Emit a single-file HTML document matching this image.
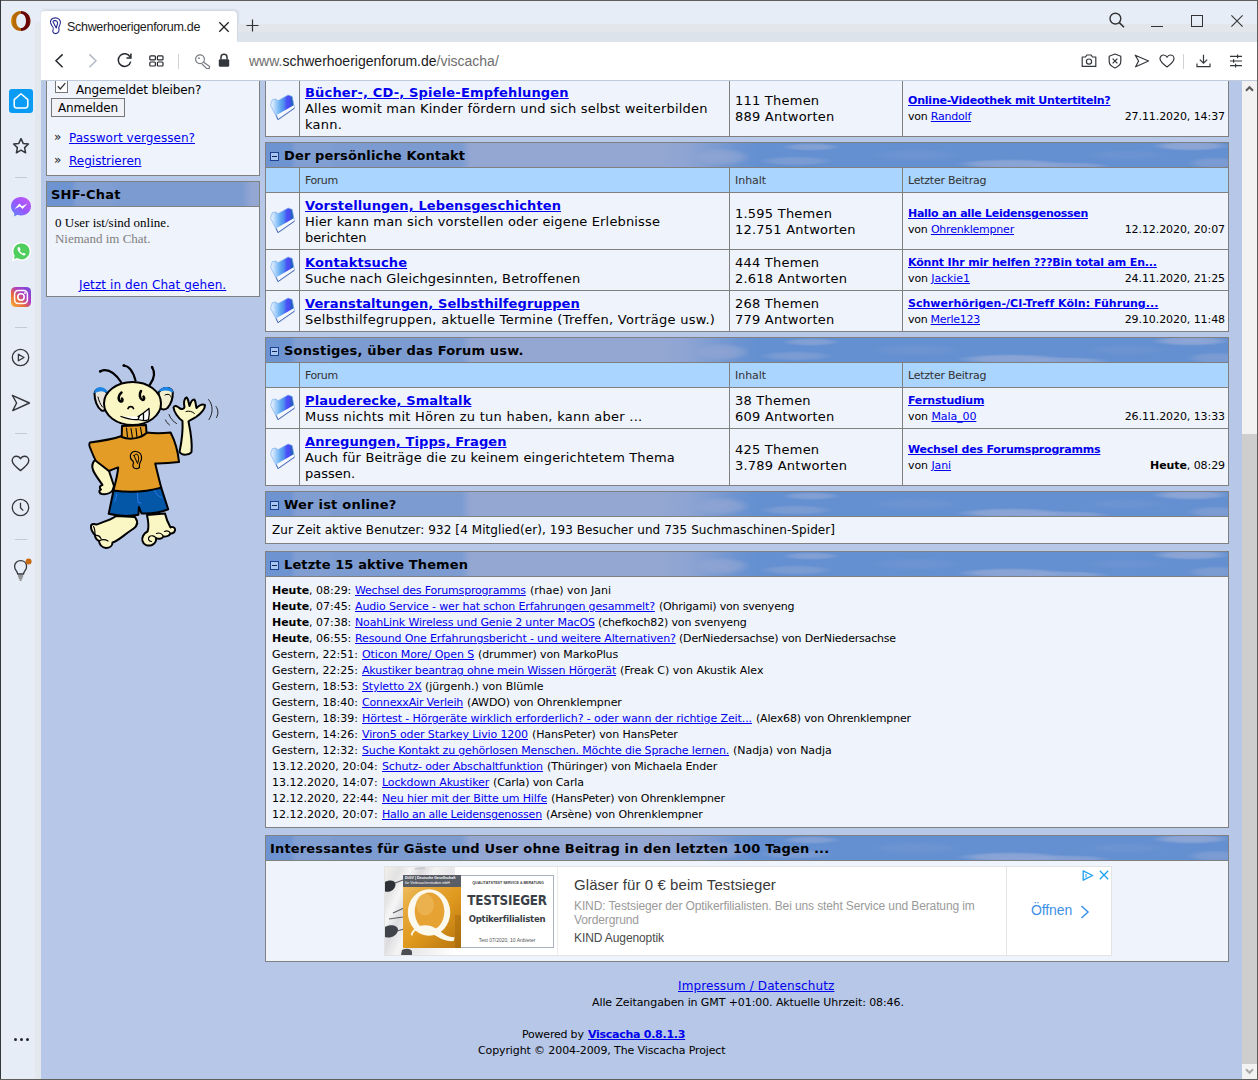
<!DOCTYPE html>
<html lang="de"><head><meta charset="utf-8"><title>Schwerhoerigenforum.de</title>
<style>
*{box-sizing:border-box;margin:0;padding:0}
html,body{width:1258px;height:1080px;overflow:hidden;background:#e7edf6}
body{position:relative;font-family:"DejaVu Sans","Liberation Sans",sans-serif;font-size:13px;color:#000}
a{color:#0000ee;text-decoration:underline}
.abs{position:absolute}
/* browser chrome */
#topline{left:0;top:0;width:1258px;height:1px;background:#5e5e5a}
#leftline{left:0;top:0;width:1px;height:1080px;background:#33363a}
#rightline{left:1257px;top:0;width:1px;height:1080px;background:#5e5e5a}
#botline{left:0;top:1079px;width:1258px;height:1px;background:#5e5e5a}
#tabbar{left:1px;top:1px;width:1256px;height:41px;background:#e7edf6}
#tab{left:41px;top:11px;width:196px;height:31px;background:#fff;border-radius:4px 4px 0 0;box-shadow:1px -1px 3px rgba(120,130,150,.28)}
#tabtitle{left:67px;top:19px;font-family:"Liberation Sans",sans-serif;font-size:12.5px;line-height:16px;color:#1b1b1b;letter-spacing:-0.3px}
#toolbar{left:41px;top:42px;width:1216px;height:38px;background:#fff}
#tbline{left:41px;top:80px;width:1216px;height:1px;background:#bfcbdd}
#side{left:1px;top:41px;width:40px;height:1038px;background:#e7edf6}
#url{left:249px;top:53px;font-family:"Liberation Sans",sans-serif;font-size:14px;color:#6e6e6e;white-space:nowrap}
#url b{font-weight:normal;color:#1b1b1b}
#ologo{left:11px;top:7px;font-family:"Liberation Serif",serif;font-weight:bold;font-size:24px;line-height:28px;color:#b25a08;background:linear-gradient(90deg,#c97a10 0%,#b35a06 45%,#5a0d0d 75%,#6a1010 100%);-webkit-background-clip:text;background-clip:text;-webkit-text-fill-color:transparent}
.sep{left:15px;width:12px;height:1px;background:#c3cbd7}
#sideband{left:35px;top:22px;width:6px;height:1057px;background:#e3e8ef}
#tabband{left:238px;top:24px;width:1019px;height:18px;background:linear-gradient(#e3e6ea 0,#e3e6ea 8px,#dde3eb 8px,#dde3eb 18px)}
/* page */
#view{left:41px;top:81px;width:1201px;height:998px;background:#b7c7e7;overflow:hidden}
#scroll{left:1242px;top:81px;width:15px;height:998px;background:#f2f2f2}
#thumb{left:1242px;top:434px;width:15px;height:630px;background:#cecece}
.t{position:absolute;white-space:nowrap}
.b{font-weight:bold}
.boxr,.rowr{background:#eff3fb;border:1px solid #808080}
.hdr{border:1px solid #808080;background-color:#6490d1;background-image:
radial-gradient(ellipse 55px 5px at 745px 21px,rgba(146,168,214,.85) 0,rgba(146,168,214,.75) 60%,rgba(146,168,214,0) 100%),
radial-gradient(ellipse 45px 4px at 800px 23px,rgba(146,168,214,.7) 0,rgba(146,168,214,.6) 60%,rgba(146,168,214,0) 100%),
radial-gradient(ellipse 40px 5px at 925px 3px,rgba(150,170,214,.85) 0,rgba(150,170,214,.7) 60%,rgba(150,170,214,0) 100%),
radial-gradient(ellipse 30px 6px at 950px 20px,rgba(140,164,212,.6) 0,rgba(140,164,212,.5) 60%,rgba(140,164,212,0) 100%),
radial-gradient(ellipse 30px 4px at 545px 4px,rgba(146,168,214,.7) 0,rgba(146,168,214,.55) 60%,rgba(146,168,214,0) 100%),
radial-gradient(ellipse 38px 5px at 530px 18px,rgba(140,164,212,.6) 0,rgba(140,164,212,.5) 60%,rgba(140,164,212,0) 100%),
radial-gradient(ellipse 30px 9px at 455px 14px,rgba(146,166,211,.8) 0,rgba(146,166,211,.6) 60%,rgba(146,166,211,0) 100%),
radial-gradient(ellipse 45px 6px at 650px 12px,rgba(120,152,210,.5) 0,rgba(120,152,210,.4) 60%,rgba(120,152,210,0) 100%),
radial-gradient(ellipse 40px 5px at 860px 12px,rgba(120,152,210,.45) 0,rgba(120,152,210,.35) 60%,rgba(120,152,210,0) 100%),
linear-gradient(90deg,#6d93d0 0,#6d93d0 24px,#809ed2 30px,#809ed2 62px,#7b9bd1 70px,#7b9bd1 195px,#94a7d3 205px,#94a7d3 395px,#8ea4d3 420px,#7f9dd2 445px,#6d94d1 470px,#6490d1 490px)}
.subr{background:#a9d5ff;border:1px solid #808080}
.ln{background:#808080}
.sh{color:#333}
.ft{letter-spacing:.12px}.fd{letter-spacing:.23px}.on{letter-spacing:.07px}.tp{letter-spacing:-.08px}.lt{letter-spacing:-.2px}.lu{letter-spacing:-.08px}.hd{letter-spacing:.15px}.sh{letter-spacing:-.2px}
.ser{font-family:"Liberation Serif",serif}
</style></head><body>
<div class="abs" id="tabbar"></div>
<div class="abs" id="tab"></div>
<div class="abs" id="tabtitle">Schwerhoerigenforum.de</div>
<div class="abs" id="toolbar"></div>
<div class="abs" id="tbline"></div>
<div class="abs" id="side"></div><div class="abs" id="sideband"></div><div class="abs" id="tabband"></div>
<div class="abs" id="url">www.<b>schwerhoerigenforum.de</b>/viscacha/</div>
<div class="abs" id="view">
<div class="abs boxr" style="left:5px;top:-21px;width:214px;height:116px;"></div>
<div class="abs" style="left:14px;top:-1px;width:13px;height:13px;border:1px solid #767676;background:#fff"></div>
<svg class="abs" style="left:15px;top:0px" width="11" height="11" viewBox="0 0 11 11"><path d="M1.8 5.2 L4.3 8 L9.3 2.2" fill="none" stroke="#333" stroke-width="1.3"/></svg>
<div class="t l12" style="left:35px;top:1px;font-size:12px;line-height:16px;letter-spacing:-0.116px;">Angemeldet bleiben?</div>
<div class="abs" style="left:10px;top:17px;width:74px;height:19px;border:1px solid #767676;background:#f0f2f7"></div>
<div class="t l12" style="left:17px;top:19px;font-size:12px;line-height:16px;letter-spacing:-0.104px;">Anmelden</div>
<div class="t " style="left:13px;top:48px;font-size:12px;line-height:16px;color:#222">»</div>
<div class="t lk" style="left:28px;top:49px;font-size:12px;line-height:16px;letter-spacing:0.037px;"><a href="#">Passwort vergessen?</a></div>
<div class="t " style="left:13px;top:71px;font-size:12px;line-height:16px;color:#222">»</div>
<div class="t lk" style="left:28px;top:72px;font-size:12px;line-height:16px;letter-spacing:-0.001px;"><a href="#">Registrieren</a></div>
<div class="abs boxr" style="left:5px;top:100px;width:214px;height:116px;"></div>
<div class="abs hdr" style="left:5px;top:100px;width:214px;height:26px;"></div>
<div class="t b hd" style="left:10px;top:106px;font-size:13px;line-height:16px;letter-spacing:0.213px;">SHF-Chat</div>
<div class="t ser" style="left:14px;top:134px;font-size:13px;line-height:16px;letter-spacing:0.013px;">0 User ist/sind online.</div>
<div class="t ser" style="left:14px;top:150px;font-size:13px;line-height:16px;color:#808080;letter-spacing:-0.019px;">Niemand im Chat.</div>
<div class="t lk" style="left:38px;top:196px;font-size:12px;line-height:16px;letter-spacing:.1px"><a href="#">Jetzt in den Chat gehen.</a></div>
<div class="abs rowr" style="left:224px;top:-2px;width:964px;height:58px;"></div>
<div class="abs ln" style="left:258px;top:-2px;width:1px;height:57px;"></div>
<div class="abs ln" style="left:688px;top:-2px;width:1px;height:57px;"></div>
<div class="abs ln" style="left:861px;top:-2px;width:1px;height:57px;"></div>
<svg class="abs" style="left:229px;top:13px" width="26" height="27" viewBox="0 0 26 27"><defs><linearGradient id="fg1" x1="0" y1="0" x2="1" y2="0"><stop offset="0" stop-color="#eef6ff"/><stop offset=".1" stop-color="#d4e7fc"/><stop offset=".24" stop-color="#9fcdf9"/><stop offset=".42" stop-color="#62aaf0"/><stop offset=".56" stop-color="#4f8cf0"/><stop offset=".68" stop-color="#4a52f6"/><stop offset=".8" stop-color="#4a4af6"/><stop offset=".86" stop-color="#2a5cc8"/><stop offset="1" stop-color="#1a62b4"/></linearGradient></defs><path d="M1.2 12 L3 6.500 L6.600 5.800 L8.500 7.600 L18.600 1.800 L22.700 3.200 L25 14.800 L8.600 26.300 Z" fill="#8a93a8" opacity=".35"/><path d="M.5 11.200 L2.300 5.700 L6 5 L7.900 6.800 L18.100 1 L22.200 2.400 L24.300 14.200 L7.900 25.600 Z" fill="url(#fg1)" stroke="#7fb0ee" stroke-width=".7"/><path d="M6.300 21.300 L23.700 11.300 L24.300 14.200 L7.900 25.600 Z" fill="#f6f8fc"/><path d="M6.300 21.300 L7.900 25.600 L24.300 14.200" fill="none" stroke="#3f62b6" stroke-width=".9"/></svg>
<div class="t b ft" style="left:264px;top:4px;font-size:13px;line-height:16px;letter-spacing:0.173px;"><a href="#">Bücher-, CD-, Spiele-Empfehlungen</a></div>
<div class="t fd" style="left:264px;top:20px;font-size:13px;line-height:16px;letter-spacing:0.185px;">Alles womit man Kinder fördern und sich selbst weiterbilden</div>
<div class="t fd" style="left:264px;top:36px;font-size:13px;line-height:16px;">kann.</div>
<div class="t fd" style="left:694px;top:12px;font-size:13px;line-height:16px;">111 Themen</div>
<div class="t fd" style="left:694px;top:28px;font-size:13px;line-height:16px;">889 Antworten</div>
<div class="t b lt" style="left:867px;top:12px;font-size:11px;line-height:16px;letter-spacing:-0.210px;"><a href="#">Online-Videothek mit Untertiteln?</a></div>
<div class="t lu" style="left:867px;top:28px;font-size:11px;line-height:16px;letter-spacing:-0.218px;">von <a href="#">Randolf</a></div>
<div class="t lu" style="right:17px;top:28px;font-size:11px;line-height:16px;">27.11.2020, 14:37</div>
<div class="abs hdr" style="left:224px;top:61px;width:964px;height:26px;"></div>
<svg class="abs" style="left:229px;top:71px" width="9" height="9" viewBox="0 0 9 9"><rect x=".5" y=".5" width="8" height="8" fill="#a8c6f0" stroke="#1d3f8f"/><rect x="2" y="4" width="5" height="1" fill="#10285f"/></svg>
<div class="t b hd" style="left:243px;top:67px;font-size:13px;line-height:16px;letter-spacing:0.136px;">Der persönliche Kontakt</div>
<div class="abs subr" style="left:224px;top:86px;width:964px;height:26px;"></div>
<div class="abs ln" style="left:258px;top:86px;width:1px;height:26px;"></div>
<div class="abs ln" style="left:688px;top:86px;width:1px;height:26px;"></div>
<div class="abs ln" style="left:861px;top:86px;width:1px;height:26px;"></div>
<div class="t sh" style="left:264px;top:92px;font-size:11px;line-height:16px;letter-spacing:-0.444px;">Forum</div>
<div class="t sh" style="left:694px;top:92px;font-size:11px;line-height:16px;letter-spacing:-0.023px;">Inhalt</div>
<div class="t sh" style="left:867px;top:92px;font-size:11px;line-height:16px;letter-spacing:-0.245px;">Letzter Beitrag</div>
<div class="abs rowr" style="left:224px;top:111px;width:964px;height:58px;"></div>
<div class="abs ln" style="left:258px;top:111px;width:1px;height:57px;"></div>
<div class="abs ln" style="left:688px;top:111px;width:1px;height:57px;"></div>
<div class="abs ln" style="left:861px;top:111px;width:1px;height:57px;"></div>
<svg class="abs" style="left:229px;top:126px" width="26" height="27" viewBox="0 0 26 27"><defs><linearGradient id="fg2" x1="0" y1="0" x2="1" y2="0"><stop offset="0" stop-color="#eef6ff"/><stop offset=".1" stop-color="#d4e7fc"/><stop offset=".24" stop-color="#9fcdf9"/><stop offset=".42" stop-color="#62aaf0"/><stop offset=".56" stop-color="#4f8cf0"/><stop offset=".68" stop-color="#4a52f6"/><stop offset=".8" stop-color="#4a4af6"/><stop offset=".86" stop-color="#2a5cc8"/><stop offset="1" stop-color="#1a62b4"/></linearGradient></defs><path d="M1.2 12 L3 6.500 L6.600 5.800 L8.500 7.600 L18.600 1.800 L22.700 3.200 L25 14.800 L8.600 26.300 Z" fill="#8a93a8" opacity=".35"/><path d="M.5 11.200 L2.300 5.700 L6 5 L7.900 6.800 L18.100 1 L22.200 2.400 L24.300 14.200 L7.900 25.600 Z" fill="url(#fg2)" stroke="#7fb0ee" stroke-width=".7"/><path d="M6.300 21.300 L23.700 11.300 L24.300 14.200 L7.900 25.600 Z" fill="#f6f8fc"/><path d="M6.300 21.300 L7.900 25.600 L24.300 14.200" fill="none" stroke="#3f62b6" stroke-width=".9"/></svg>
<div class="t b ft" style="left:264px;top:117px;font-size:13px;line-height:16px;letter-spacing:0.111px;"><a href="#">Vorstellungen, Lebensgeschichten</a></div>
<div class="t fd" style="left:264px;top:133px;font-size:13px;line-height:16px;letter-spacing:0.160px;">Hier kann man sich vorstellen oder eigene Erlebnisse</div>
<div class="t fd" style="left:264px;top:149px;font-size:13px;line-height:16px;letter-spacing:-0.067px;">berichten</div>
<div class="t fd" style="left:694px;top:125px;font-size:13px;line-height:16px;">1.595 Themen</div>
<div class="t fd" style="left:694px;top:141px;font-size:13px;line-height:16px;">12.751 Antworten</div>
<div class="t b lt" style="left:867px;top:125px;font-size:11px;line-height:16px;letter-spacing:-0.274px;"><a href="#">Hallo an alle Leidensgenossen</a></div>
<div class="t lu" style="left:867px;top:141px;font-size:11px;line-height:16px;letter-spacing:-0.208px;">von <a href="#">Ohrenklempner</a></div>
<div class="t lu" style="right:17px;top:141px;font-size:11px;line-height:16px;">12.12.2020, 20:07</div>
<div class="abs rowr" style="left:224px;top:168px;width:964px;height:42px;"></div>
<div class="abs ln" style="left:258px;top:168px;width:1px;height:41px;"></div>
<div class="abs ln" style="left:688px;top:168px;width:1px;height:41px;"></div>
<div class="abs ln" style="left:861px;top:168px;width:1px;height:41px;"></div>
<svg class="abs" style="left:229px;top:175px" width="26" height="27" viewBox="0 0 26 27"><defs><linearGradient id="fg3" x1="0" y1="0" x2="1" y2="0"><stop offset="0" stop-color="#eef6ff"/><stop offset=".1" stop-color="#d4e7fc"/><stop offset=".24" stop-color="#9fcdf9"/><stop offset=".42" stop-color="#62aaf0"/><stop offset=".56" stop-color="#4f8cf0"/><stop offset=".68" stop-color="#4a52f6"/><stop offset=".8" stop-color="#4a4af6"/><stop offset=".86" stop-color="#2a5cc8"/><stop offset="1" stop-color="#1a62b4"/></linearGradient></defs><path d="M1.2 12 L3 6.500 L6.600 5.800 L8.500 7.600 L18.600 1.800 L22.700 3.200 L25 14.800 L8.600 26.300 Z" fill="#8a93a8" opacity=".35"/><path d="M.5 11.200 L2.300 5.700 L6 5 L7.900 6.800 L18.100 1 L22.200 2.400 L24.300 14.200 L7.900 25.600 Z" fill="url(#fg3)" stroke="#7fb0ee" stroke-width=".7"/><path d="M6.300 21.300 L23.700 11.300 L24.300 14.200 L7.900 25.600 Z" fill="#f6f8fc"/><path d="M6.300 21.300 L7.900 25.600 L24.300 14.200" fill="none" stroke="#3f62b6" stroke-width=".9"/></svg>
<div class="t b ft" style="left:264px;top:174px;font-size:13px;line-height:16px;letter-spacing:0.122px;"><a href="#">Kontaktsuche</a></div>
<div class="t fd" style="left:264px;top:190px;font-size:13px;line-height:16px;letter-spacing:0.142px;">Suche nach Gleichgesinnten, Betroffenen</div>
<div class="t fd" style="left:694px;top:174px;font-size:13px;line-height:16px;">444 Themen</div>
<div class="t fd" style="left:694px;top:190px;font-size:13px;line-height:16px;">2.618 Antworten</div>
<div class="t b lt" style="left:867px;top:174px;font-size:11px;line-height:16px;letter-spacing:-0.169px;"><a href="#">Könnt Ihr mir helfen ???Bin total am En...</a></div>
<div class="t lu" style="left:867px;top:190px;font-size:11px;line-height:16px;letter-spacing:-0.095px;">von <a href="#">Jackie1</a></div>
<div class="t lu" style="right:17px;top:190px;font-size:11px;line-height:16px;">24.11.2020, 21:25</div>
<div class="abs rowr" style="left:224px;top:209px;width:964px;height:42px;"></div>
<div class="abs ln" style="left:258px;top:209px;width:1px;height:41px;"></div>
<div class="abs ln" style="left:688px;top:209px;width:1px;height:41px;"></div>
<div class="abs ln" style="left:861px;top:209px;width:1px;height:41px;"></div>
<svg class="abs" style="left:229px;top:216px" width="26" height="27" viewBox="0 0 26 27"><defs><linearGradient id="fg4" x1="0" y1="0" x2="1" y2="0"><stop offset="0" stop-color="#eef6ff"/><stop offset=".1" stop-color="#d4e7fc"/><stop offset=".24" stop-color="#9fcdf9"/><stop offset=".42" stop-color="#62aaf0"/><stop offset=".56" stop-color="#4f8cf0"/><stop offset=".68" stop-color="#4a52f6"/><stop offset=".8" stop-color="#4a4af6"/><stop offset=".86" stop-color="#2a5cc8"/><stop offset="1" stop-color="#1a62b4"/></linearGradient></defs><path d="M1.2 12 L3 6.500 L6.600 5.800 L8.500 7.600 L18.600 1.800 L22.700 3.200 L25 14.800 L8.600 26.300 Z" fill="#8a93a8" opacity=".35"/><path d="M.5 11.200 L2.300 5.700 L6 5 L7.900 6.800 L18.100 1 L22.200 2.400 L24.300 14.200 L7.900 25.600 Z" fill="url(#fg4)" stroke="#7fb0ee" stroke-width=".7"/><path d="M6.300 21.300 L23.700 11.300 L24.300 14.200 L7.900 25.600 Z" fill="#f6f8fc"/><path d="M6.300 21.300 L7.900 25.600 L24.300 14.200" fill="none" stroke="#3f62b6" stroke-width=".9"/></svg>
<div class="t b ft" style="left:264px;top:215px;font-size:13px;line-height:16px;letter-spacing:0.093px;"><a href="#">Veranstaltungen, Selbsthilfegruppen</a></div>
<div class="t fd" style="left:264px;top:231px;font-size:13px;line-height:16px;letter-spacing:0.265px;">Selbsthilfegruppen, aktuelle Termine (Treffen, Vorträge usw.)</div>
<div class="t fd" style="left:694px;top:215px;font-size:13px;line-height:16px;">268 Themen</div>
<div class="t fd" style="left:694px;top:231px;font-size:13px;line-height:16px;">779 Antworten</div>
<div class="t b lt" style="left:867px;top:215px;font-size:11px;line-height:16px;letter-spacing:0.030px;"><a href="#">Schwerhörigen-/CI-Treff Köln: Führung...</a></div>
<div class="t lu" style="left:867px;top:231px;font-size:11px;line-height:16px;letter-spacing:-0.275px;">von <a href="#">Merle123</a></div>
<div class="t lu" style="right:17px;top:231px;font-size:11px;line-height:16px;">29.10.2020, 11:48</div>
<div class="abs hdr" style="left:224px;top:256px;width:964px;height:26px;"></div>
<svg class="abs" style="left:229px;top:266px" width="9" height="9" viewBox="0 0 9 9"><rect x=".5" y=".5" width="8" height="8" fill="#a8c6f0" stroke="#1d3f8f"/><rect x="2" y="4" width="5" height="1" fill="#10285f"/></svg>
<div class="t b hd" style="left:243px;top:262px;font-size:13px;line-height:16px;letter-spacing:0.187px;">Sonstiges, über das Forum usw.</div>
<div class="abs subr" style="left:224px;top:281px;width:964px;height:26px;"></div>
<div class="abs ln" style="left:258px;top:281px;width:1px;height:26px;"></div>
<div class="abs ln" style="left:688px;top:281px;width:1px;height:26px;"></div>
<div class="abs ln" style="left:861px;top:281px;width:1px;height:26px;"></div>
<div class="t sh" style="left:264px;top:287px;font-size:11px;line-height:16px;letter-spacing:-0.444px;">Forum</div>
<div class="t sh" style="left:694px;top:287px;font-size:11px;line-height:16px;letter-spacing:-0.023px;">Inhalt</div>
<div class="t sh" style="left:867px;top:287px;font-size:11px;line-height:16px;letter-spacing:-0.245px;">Letzter Beitrag</div>
<div class="abs rowr" style="left:224px;top:306px;width:964px;height:42px;"></div>
<div class="abs ln" style="left:258px;top:306px;width:1px;height:41px;"></div>
<div class="abs ln" style="left:688px;top:306px;width:1px;height:41px;"></div>
<div class="abs ln" style="left:861px;top:306px;width:1px;height:41px;"></div>
<svg class="abs" style="left:229px;top:313px" width="26" height="27" viewBox="0 0 26 27"><defs><linearGradient id="fg5" x1="0" y1="0" x2="1" y2="0"><stop offset="0" stop-color="#eef6ff"/><stop offset=".1" stop-color="#d4e7fc"/><stop offset=".24" stop-color="#9fcdf9"/><stop offset=".42" stop-color="#62aaf0"/><stop offset=".56" stop-color="#4f8cf0"/><stop offset=".68" stop-color="#4a52f6"/><stop offset=".8" stop-color="#4a4af6"/><stop offset=".86" stop-color="#2a5cc8"/><stop offset="1" stop-color="#1a62b4"/></linearGradient></defs><path d="M1.2 12 L3 6.500 L6.600 5.800 L8.500 7.600 L18.600 1.800 L22.700 3.200 L25 14.800 L8.600 26.300 Z" fill="#8a93a8" opacity=".35"/><path d="M.5 11.200 L2.300 5.700 L6 5 L7.900 6.800 L18.100 1 L22.200 2.400 L24.300 14.200 L7.900 25.600 Z" fill="url(#fg5)" stroke="#7fb0ee" stroke-width=".7"/><path d="M6.300 21.300 L23.700 11.300 L24.300 14.200 L7.900 25.600 Z" fill="#f6f8fc"/><path d="M6.300 21.300 L7.900 25.600 L24.300 14.200" fill="none" stroke="#3f62b6" stroke-width=".9"/></svg>
<div class="t b ft" style="left:264px;top:312px;font-size:13px;line-height:16px;letter-spacing:0.121px;"><a href="#">Plauderecke, Smaltalk</a></div>
<div class="t fd" style="left:264px;top:328px;font-size:13px;line-height:16px;letter-spacing:0.257px;">Muss nichts mit Hören zu tun haben, kann aber ...</div>
<div class="t fd" style="left:694px;top:312px;font-size:13px;line-height:16px;">38 Themen</div>
<div class="t fd" style="left:694px;top:328px;font-size:13px;line-height:16px;">609 Antworten</div>
<div class="t b lt" style="left:867px;top:312px;font-size:11px;line-height:16px;"><a href="#">Fernstudium</a></div>
<div class="t lu" style="left:867px;top:328px;font-size:11px;line-height:16px;">von <a href="#">Mala_00</a></div>
<div class="t lu" style="right:17px;top:328px;font-size:11px;line-height:16px;">26.11.2020, 13:33</div>
<div class="abs rowr" style="left:224px;top:347px;width:964px;height:58px;"></div>
<div class="abs ln" style="left:258px;top:347px;width:1px;height:57px;"></div>
<div class="abs ln" style="left:688px;top:347px;width:1px;height:57px;"></div>
<div class="abs ln" style="left:861px;top:347px;width:1px;height:57px;"></div>
<svg class="abs" style="left:229px;top:362px" width="26" height="27" viewBox="0 0 26 27"><defs><linearGradient id="fg6" x1="0" y1="0" x2="1" y2="0"><stop offset="0" stop-color="#eef6ff"/><stop offset=".1" stop-color="#d4e7fc"/><stop offset=".24" stop-color="#9fcdf9"/><stop offset=".42" stop-color="#62aaf0"/><stop offset=".56" stop-color="#4f8cf0"/><stop offset=".68" stop-color="#4a52f6"/><stop offset=".8" stop-color="#4a4af6"/><stop offset=".86" stop-color="#2a5cc8"/><stop offset="1" stop-color="#1a62b4"/></linearGradient></defs><path d="M1.2 12 L3 6.500 L6.600 5.800 L8.500 7.600 L18.600 1.800 L22.700 3.200 L25 14.800 L8.600 26.300 Z" fill="#8a93a8" opacity=".35"/><path d="M.5 11.200 L2.300 5.700 L6 5 L7.900 6.800 L18.100 1 L22.200 2.400 L24.300 14.200 L7.900 25.600 Z" fill="url(#fg6)" stroke="#7fb0ee" stroke-width=".7"/><path d="M6.300 21.300 L23.700 11.300 L24.300 14.200 L7.900 25.600 Z" fill="#f6f8fc"/><path d="M6.300 21.300 L7.900 25.600 L24.300 14.200" fill="none" stroke="#3f62b6" stroke-width=".9"/></svg>
<div class="t b ft" style="left:264px;top:353px;font-size:13px;line-height:16px;letter-spacing:0.106px;"><a href="#">Anregungen, Tipps, Fragen</a></div>
<div class="t fd" style="left:264px;top:369px;font-size:13px;line-height:16px;letter-spacing:0.163px;">Auch für Beiträge die zu keinem eingerichtetem Thema</div>
<div class="t fd" style="left:264px;top:385px;font-size:13px;line-height:16px;letter-spacing:-0.007px;">passen.</div>
<div class="t fd" style="left:694px;top:361px;font-size:13px;line-height:16px;">425 Themen</div>
<div class="t fd" style="left:694px;top:377px;font-size:13px;line-height:16px;">3.789 Antworten</div>
<div class="t b lt" style="left:867px;top:361px;font-size:11px;line-height:16px;"><a href="#">Wechsel des Forumsprogramms</a></div>
<div class="t lu" style="left:867px;top:377px;font-size:11px;line-height:16px;">von <a href="#">Jani</a></div>
<div class="t lu" style="right:17px;top:377px;font-size:11px;line-height:16px;"><b>Heute</b>, 08:29</div>
<div class="abs hdr" style="left:224px;top:410px;width:964px;height:26px;"></div>
<svg class="abs" style="left:229px;top:420px" width="9" height="9" viewBox="0 0 9 9"><rect x=".5" y=".5" width="8" height="8" fill="#a8c6f0" stroke="#1d3f8f"/><rect x="2" y="4" width="5" height="1" fill="#10285f"/></svg>
<div class="t b hd" style="left:243px;top:416px;font-size:13px;line-height:16px;letter-spacing:0.216px;">Wer ist online?</div>
<div class="abs rowr" style="left:224px;top:435px;width:964px;height:28px;"></div>
<div class="t on" style="left:231px;top:441px;font-size:12px;line-height:16px;letter-spacing:0.073px;">Zur Zeit aktive Benutzer: 932 [4 Mitglied(er), 193 Besucher und 735 Suchmaschinen-Spider]</div>
<div class="abs hdr" style="left:224px;top:470px;width:964px;height:26px;"></div>
<svg class="abs" style="left:229px;top:480px" width="9" height="9" viewBox="0 0 9 9"><rect x=".5" y=".5" width="8" height="8" fill="#a8c6f0" stroke="#1d3f8f"/><rect x="2" y="4" width="5" height="1" fill="#10285f"/></svg>
<div class="t b hd" style="left:243px;top:476px;font-size:13px;line-height:16px;letter-spacing:0.108px;">Letzte 15 aktive Themen</div>
<div class="abs rowr" style="left:224px;top:495px;width:964px;height:252px;"></div>
<div class="t tp" style="left:231px;top:502px;font-size:11px;line-height:16px;letter-spacing:-0.027px;"><b>Heute</b>, 08:29:</div>
<div class="t tp" style="left:314px;top:502px;font-size:11px;line-height:16px;letter-spacing:-0.195px;"><a href="#">Wechsel des Forumsprogramms</a></div>
<div class="t tp" style="left:489px;top:502px;font-size:11px;line-height:16px;letter-spacing:0.028px;">(rhae) von Jani</div>
<div class="t tp" style="left:231px;top:518px;font-size:11px;line-height:16px;letter-spacing:-0.027px;"><b>Heute</b>, 07:45:</div>
<div class="t tp" style="left:314px;top:518px;font-size:11px;line-height:16px;letter-spacing:-0.138px;"><a href="#">Audio Service - wer hat schon Erfahrungen gesammelt?</a></div>
<div class="t tp" style="left:618px;top:518px;font-size:11px;line-height:16px;letter-spacing:-0.191px;">(Ohrigami) von svenyeng</div>
<div class="t tp" style="left:231px;top:534px;font-size:11px;line-height:16px;letter-spacing:-0.027px;"><b>Heute</b>, 07:38:</div>
<div class="t tp" style="left:314px;top:534px;font-size:11px;line-height:16px;letter-spacing:-0.145px;"><a href="#">NoahLink Wireless und Genie 2 unter MacOS</a></div>
<div class="t tp" style="left:557px;top:534px;font-size:11px;line-height:16px;letter-spacing:-0.150px;">(chefkoch82) von svenyeng</div>
<div class="t tp" style="left:231px;top:550px;font-size:11px;line-height:16px;letter-spacing:-0.027px;"><b>Heute</b>, 06:55:</div>
<div class="t tp" style="left:314px;top:550px;font-size:11px;line-height:16px;letter-spacing:-0.139px;"><a href="#">Resound One Erfahrungsbericht - und weitere Alternativen?</a></div>
<div class="t tp" style="left:638px;top:550px;font-size:11px;line-height:16px;letter-spacing:-0.190px;">(DerNiedersachse) von DerNiedersachse</div>
<div class="t tp" style="left:231px;top:566px;font-size:11px;line-height:16px;letter-spacing:0.013px;">Gestern, 22:51:</div>
<div class="t tp" style="left:321px;top:566px;font-size:11px;line-height:16px;letter-spacing:-0.078px;"><a href="#">Oticon More/ Open S</a></div>
<div class="t tp" style="left:437px;top:566px;font-size:11px;line-height:16px;letter-spacing:-0.120px;">(drummer) von MarkoPlus</div>
<div class="t tp" style="left:231px;top:582px;font-size:11px;line-height:16px;letter-spacing:0.013px;">Gestern, 22:25:</div>
<div class="t tp" style="left:321px;top:582px;font-size:11px;line-height:16px;letter-spacing:-0.156px;"><a href="#">Akustiker beantrag ohne mein Wissen Hörgerät</a></div>
<div class="t tp" style="left:579px;top:582px;font-size:11px;line-height:16px;letter-spacing:-0.017px;">(Freak C) von Akustik Alex</div>
<div class="t tp" style="left:231px;top:598px;font-size:11px;line-height:16px;letter-spacing:0.013px;">Gestern, 18:53:</div>
<div class="t tp" style="left:321px;top:598px;font-size:11px;line-height:16px;letter-spacing:-0.122px;"><a href="#">Styletto 2X</a></div>
<div class="t tp" style="left:384px;top:598px;font-size:11px;line-height:16px;letter-spacing:-0.043px;">(jürgenh.) von Blümle</div>
<div class="t tp" style="left:231px;top:614px;font-size:11px;line-height:16px;letter-spacing:0.013px;">Gestern, 18:40:</div>
<div class="t tp" style="left:321px;top:614px;font-size:11px;line-height:16px;letter-spacing:-0.181px;"><a href="#">ConnexxAir Verleih</a></div>
<div class="t tp" style="left:426px;top:614px;font-size:11px;line-height:16px;letter-spacing:-0.071px;">(AWDO) von Ohrenklempner</div>
<div class="t tp" style="left:231px;top:630px;font-size:11px;line-height:16px;letter-spacing:0.013px;">Gestern, 18:39:</div>
<div class="t tp" style="left:321px;top:630px;font-size:11px;line-height:16px;letter-spacing:-0.099px;"><a href="#">Hörtest - Hörgeräte wirklich erforderlich? - oder wann der richtige Zeit...</a></div>
<div class="t tp" style="left:715px;top:630px;font-size:11px;line-height:16px;letter-spacing:-0.167px;">(Alex68) von Ohrenklempner</div>
<div class="t tp" style="left:231px;top:646px;font-size:11px;line-height:16px;letter-spacing:0.013px;">Gestern, 14:26:</div>
<div class="t tp" style="left:321px;top:646px;font-size:11px;line-height:16px;letter-spacing:-0.121px;"><a href="#">Viron5 oder Starkey Livio 1200</a></div>
<div class="t tp" style="left:491px;top:646px;font-size:11px;line-height:16px;letter-spacing:-0.106px;">(HansPeter) von HansPeter</div>
<div class="t tp" style="left:231px;top:662px;font-size:11px;line-height:16px;letter-spacing:0.013px;">Gestern, 12:32:</div>
<div class="t tp" style="left:321px;top:662px;font-size:11px;line-height:16px;letter-spacing:-0.164px;"><a href="#">Suche Kontakt zu gehörlosen Menschen. Möchte die Sprache lernen.</a></div>
<div class="t tp" style="left:692px;top:662px;font-size:11px;line-height:16px;letter-spacing:-0.031px;">(Nadja) von Nadja</div>
<div class="t tp" style="left:231px;top:678px;font-size:11px;line-height:16px;letter-spacing:0.018px;">13.12.2020, 20:04:</div>
<div class="t tp" style="left:341px;top:678px;font-size:11px;line-height:16px;letter-spacing:-0.163px;"><a href="#">Schutz- oder Abschaltfunktion</a></div>
<div class="t tp" style="left:506px;top:678px;font-size:11px;line-height:16px;letter-spacing:-0.126px;">(Thüringer) von Michaela Ender</div>
<div class="t tp" style="left:231px;top:694px;font-size:11px;line-height:16px;letter-spacing:0.018px;">13.12.2020, 14:07:</div>
<div class="t tp" style="left:341px;top:694px;font-size:11px;line-height:16px;letter-spacing:-0.116px;"><a href="#">Lockdown Akustiker</a></div>
<div class="t tp" style="left:452px;top:694px;font-size:11px;line-height:16px;letter-spacing:-0.143px;">(Carla) von Carla</div>
<div class="t tp" style="left:231px;top:710px;font-size:11px;line-height:16px;letter-spacing:0.018px;">12.12.2020, 22:44:</div>
<div class="t tp" style="left:341px;top:710px;font-size:11px;line-height:16px;letter-spacing:-0.138px;"><a href="#">Neu hier mit der Bitte um Hilfe</a></div>
<div class="t tp" style="left:510px;top:710px;font-size:11px;line-height:16px;letter-spacing:-0.140px;">(HansPeter) von Ohrenklempner</div>
<div class="t tp" style="left:231px;top:726px;font-size:11px;line-height:16px;letter-spacing:0.018px;">12.12.2020, 20:07:</div>
<div class="t tp" style="left:341px;top:726px;font-size:11px;line-height:16px;letter-spacing:-0.230px;"><a href="#">Hallo an alle Leidensgenossen</a></div>
<div class="t tp" style="left:505px;top:726px;font-size:11px;line-height:16px;letter-spacing:-0.128px;">(Arsène) von Ohrenklempner</div>
<div class="abs hdr" style="left:224px;top:754px;width:964px;height:26px;"></div>
<div class="t b hd" style="left:229px;top:760px;font-size:13px;line-height:16px;letter-spacing:0.157px;">Interessantes für Gäste und User ohne Beitrag in den letzten 100 Tagen ...</div>
<div class="abs rowr" style="left:224px;top:779px;width:964px;height:102px;"></div>
<!-- ad -->
<div class="abs" id="ad" style="left:343px;top:785px;width:728px;height:90px;background:#fff;border:1px solid #e3e3e3;overflow:hidden;font-family:'Liberation Sans',sans-serif">
 <div class="abs" style="left:0;top:0;width:172px;height:88px;background:#fff"></div>
 <div class="abs" style="left:0;top:0;width:70px;height:88px;background:linear-gradient(115deg,#f3efe9 0%,#e2e2e4 14%,#f6f6f6 24%,#dcdcdf 34%,#f4f4f4 46%,#e8e8ea 60%,#fff 100%)"></div>
 <svg class="abs" style="left:0;top:0" width="40" height="88" viewBox="0 0 40 88"><g fill="#2e3138"><path d="M0 15 C4 12.500 10 13 10.500 17 C10.500 22.500 5 26 0 24.500 Z"/><path d="M0 60 C5 57 13 58 13 63 C12 69 5 72 0 70 Z" opacity=".9"/><path d="M17 83 C21 81 26 81.500 27 84.500 L27 88 L16 88 Z" opacity=".85"/></g><g fill="none" stroke="#3a3d44" stroke-width="1.200" opacity=".8"><path d="M10 16 L18 13"/><path d="M8 46 L19 41 M4 52 L18 50"/><path d="M12 64 L19 62"/></g><path d="M30 2 C40 0 52 3 60 6" fill="none" stroke="#b9bcc4" stroke-width="2" opacity=".6"/></svg>
 <div class="abs" style="left:18px;top:8px;width:151px;height:73px;background:#fff;border:1px solid #aab2c2"></div>
 <div class="abs" style="left:18px;top:8px;width:58px;height:73px;background:linear-gradient(135deg,#f0c56c 0%,#e6a83a 30%,#e09a20 55%,#c98514 80%,#b67610 100%)"></div>
 <div class="abs" style="left:70px;top:48px;width:6px;height:33px;background:rgba(150,95,10,.35)"></div>
 <svg class="abs" style="left:18px;top:8px" width="58" height="73" viewBox="0 0 58 74"><ellipse cx="26" cy="38" rx="21.500" ry="23.500" fill="#fbf8ee"/><ellipse cx="26.500" cy="37" rx="15" ry="19.300" fill="#e6a233"/><ellipse cx="22" cy="30" rx="9" ry="11" fill="#edb85a" opacity=".7"/><path d="M9 62 C10 56 15 54 21 55.500 C30 58 38 68 51 67 L52 63 C42 64 36 54 27 51.500 C18 49.500 10 53 7.500 60 Z" fill="#fbf8ee"/></svg>
 <div class="abs" style="left:18px;top:8px;width:58px;height:12px;background:#595d66"></div>
 <div class="abs" style="left:20px;top:9px;font-size:3.600px;line-height:5px;color:#fff;white-space:nowrap;font-weight:bold">DtGV | Deutsche Gesellschaft<br><span style="font-weight:normal">für Verbraucherstudien mbH</span></div>
 <div class="abs" style="left:77px;top:13px;width:92px;text-align:center;font-size:3.700px;line-height:6px;color:#3c3f46;font-weight:bold;white-space:nowrap;letter-spacing:-.05px">QUALITÄTSTEST SERVICE &amp; BERATUNG</div>
 <div class="abs" style="left:76px;top:26px;width:92px;text-align:center;font-family:'DejaVu Sans Condensed','DejaVu Sans',sans-serif;font-weight:bold;font-size:13.300px;line-height:16px;color:#3a3f48;letter-spacing:-.2px">TESTSIEGER</div>
 <div class="abs" style="left:76px;top:46px;width:92px;text-align:center;font-family:'DejaVu Sans Condensed','DejaVu Sans',sans-serif;font-weight:bold;font-size:9.500px;line-height:12px;color:#3a3f48;letter-spacing:-.24px">Optikerfilialisten</div>
 <div class="abs" style="left:76px;top:70px;width:92px;text-align:center;font-size:5px;line-height:6px;color:#555;white-space:nowrap">Test 07/2020, 10 Anbieter</div>
 <div class="abs" style="left:172px;top:0;width:1px;height:88px;background:#ececec"></div>
 <div class="abs" style="left:189px;top:9px;font-size:15px;line-height:18px;color:#3a3a3a;white-space:nowrap;letter-spacing:.07px">Gläser für 0 € beim Testsieger</div>
 <div class="abs" style="left:189px;top:32px;font-size:12px;line-height:14px;color:#9a9a9a;white-space:nowrap;letter-spacing:-.11px">KIND: Testsieger der Optikerfilialisten. Bei uns steht Service und Beratung im<br>Vordergrund</div>
 <div class="abs" style="left:189px;top:64px;font-size:12px;line-height:14px;color:#4a4a4a;white-space:nowrap;letter-spacing:-.1px">KIND Augenoptik</div>
 <div class="abs" style="left:621px;top:0;width:1px;height:88px;background:#e6e6e6"></div>
 <div class="abs" style="left:646px;top:35px;font-size:14px;line-height:16px;color:#3d8fe6;white-space:nowrap;letter-spacing:-.1px">Öffnen</div>
 <svg class="abs" style="left:695px;top:38px" width="10" height="14" viewBox="0 0 10 14"><path d="M1.500 1 L8 7 L1.500 13" fill="none" stroke="#3d8fe6" stroke-width="1.500"/></svg>
 <svg class="abs" style="left:697px;top:3px" width="12" height="11" viewBox="0 0 12 11"><path d="M1.200 .800 L10.600 5.500 L1.200 10.200 Z" fill="none" stroke="#1ba1f0" stroke-width="1.300" stroke-linejoin="round"/><path d="M4 4 V7.500" stroke="#1ba1f0" stroke-width="1"/></svg>
 <svg class="abs" style="left:714px;top:3px" width="10" height="10" viewBox="0 0 10 10"><path d="M.800 .800 L9.200 9.200 M9.200 .800 L.800 9.200" stroke="#1ba1f0" stroke-width="1.300" fill="none"/></svg>
</div>

<div class="t lk" style="left:637px;top:897px;font-size:12px;line-height:16px;letter-spacing:0.117px;"><a href="#">Impressum / Datenschutz</a></div>
<div class="t tp" style="left:551px;top:914px;font-size:11px;line-height:16px;letter-spacing:-0.094px;">Alle Zeitangaben in GMT +01:00. Aktuelle Uhrzeit: 08:46.</div>
<div class="t tp" style="left:481px;top:946px;font-size:11px;line-height:16px;letter-spacing:-0.207px;">Powered by</div>
<div class="t tp" style="left:547px;top:946px;font-size:11px;line-height:16px;letter-spacing:-0.263px;"><a href="#" style="font-weight:bold">Viscacha 0.8.1.3</a></div>
<div class="t tp" style="left:437px;top:962px;font-size:11px;line-height:16px;letter-spacing:-0.114px;">Copyright © 2004-2009, The Viscacha Project</div>
<!-- mascot -->
<svg class="abs" style="left:39px;top:274px" width="150" height="200" viewBox="80 355 150 200">
<g stroke="#000" stroke-width="2" stroke-linejoin="round" stroke-linecap="round">
<!-- right arm + hand -->
<path d="M179.5 452 C182 440 183 430 182.5 421 C178 418 174 412 173.5 407.5 C174.5 405 177 405.5 180 408.5 C182 409.5 184 409 184.5 407 C183.5 403 184 398.5 186.5 397.5 C188.5 398.5 188.5 403 189.5 406 C190.5 403 191.5 399.5 194 399.5 C196 400.5 195.5 404.5 196.5 408 C199 405.5 202.5 403.5 205 405 C205 409 201 413.5 196 417 C192 419.5 190 420 188.5 421.5 C190.5 431 192.5 442 191.5 452 C189.5 455 182 456 179.5 452 Z" fill="#fbf7c4"/>
<path d="M186 411.5 C189 410.5 192.5 411.5 194.5 413.5" fill="none" stroke-width="1"/>
<!-- left arm -->
<path d="M96 459 C92.5 462 91.5 466 93 470 C95.5 476 100 481 102.5 485 C99.5 485.5 99 488 101 489.5 C98.5 490.5 99 493.5 102 494 C106 494.5 110.5 493 112.5 490.5 L114 486 L109 471 Z" fill="#fbf7c4"/>
<!-- left foot -->
<path d="M116 516 C112 519.5 102 522.5 96.5 524.5 C93 523 90.5 524.5 91 527 C91 530.5 93 533 95 535 C95 538 97 540 99 541 C99.5 545 102 547.5 106 548 C110 548 112.5 545.5 112.5 542.5 C118 541 124 535 130 531 C134.5 528.5 138 524.5 137 521 L135 517 Z" fill="#fbf7c4"/>
<path d="M93.5 526.5 C95 528.5 95 531 95 535 M95.500 535.5 C98 535 100 536.5 101 538.5 M99 541 C101.500 539.500 105.500 539.500 108 541" fill="none" stroke-width="1.2"/>
<!-- right foot -->
<path d="M147 515 C148.5 522 149 528 147.500 531.500 C143.500 533.500 141.500 537.500 142.500 541 C143.500 545 148 546.500 152 545 C155 543.500 156.500 540.500 156 538 C158.500 539.500 162 539 163.500 536.500 C166.500 537 169.500 535.500 170.500 533.500 C173.500 533.500 175.500 531.500 175 529 C174.500 527 172 526.500 170.500 527.500 C168 523 166 518 165 513.500 Z" fill="#fbf7c4"/>
<path d="M151.500 541.500 C148.500 541.500 147.500 538.500 149.500 536.500 C151.500 535 154.500 536 156 538 M156.500 533.500 C159 532.500 162 533.500 163.500 536.500 M164.500 531.500 C167 530.500 169.500 531.500 170.500 533.500" fill="none" stroke-width="1.2"/>
<!-- shorts -->
<path d="M113.500 490.500 L108.700 513.800 C118 516 130 516.500 138.400 514.800 L139 507 L141.500 513.500 C150 514 160 512.500 168.200 509.200 L161.200 487.600 Z" fill="#0456a6"/>
<path d="M137.500 492 L138 502.500 L141 503 M116.500 494 C116.500 498 116 500 114.500 501.500 M154.500 490.500 C156 494 158 496 161.500 497.500" fill="none" stroke="#2b7cf0" stroke-width="1"/>
<!-- shirt -->
<path d="M121.700 436 C110 440 98 441.500 90 442.500 C88.500 444 89.500 447 91 450 C93 455 94.500 458.500 96 461 L109 471 C112.500 469.500 116 468 118.200 467.400 C117.500 475 115.500 483 113.400 490.500 C128 492.500 146 492 161.200 487.600 C159 479 157 471 155.200 463.400 C163 463.500 171 463 179 462 C178 452 175 441 170.600 432.500 C162 433.500 154 433.500 146.200 432.500 Z" fill="#e39d27"/>
<!-- neck -->
<path d="M122 426 L121.700 437 C129 440 140 439 146.500 433 L146 425 Z" fill="#e39d27"/>
<path d="M126.500 428 L127.500 437 M131 428.500 L132.500 438 M136 428.500 L137 437.500 M140.500 427.500 L142 436" fill="none" stroke-width="1.1"/>
<!-- ear logo -->
<path d="M130.500 458 C129.500 453.500 132.500 451 136 451.500 C140 452 142 455 141.500 459 C141 462 139 463 139.500 465.500 C140 468.500 137.500 469 135.500 468.500 C132.500 468 132.500 465 133.500 463 C134 461 131 460 130.500 458 Z" fill="#e39d27" stroke-width="1.2"/>
<path d="M134 455.500 L137.500 463.500 C139 460 139 456.500 137.500 454.500 C136 454 134.500 454.500 134 455.500 Z" fill="#e39d27" stroke-width="1"/>
<!-- ears -->
<path d="M107 393 C102 386.500 95.500 388 94.500 393.500 C94.500 400 97 407.500 101.500 410.500 C104 411 106 410 107 408 Z" fill="#e6e4dc"/>
<path d="M94.700 392.500 C96 386.500 104 386 107.500 392.500 C104 390.500 98.500 390.500 94.700 392.500 Z" fill="#1c86e8" stroke="#1c86e8" stroke-width="1.2"/>
<path d="M158.500 392.500 C163 386.500 171 386.500 172.800 392 C173 398 171 404 167.500 408 C165 410 162 410 160.500 408 Z" fill="#f2efcf"/>
<path d="M159.500 391 C163 386 171 386.500 172.800 392 C169 389.500 163.500 389.500 159.500 391 Z" fill="#1c86e8" stroke="#1c86e8" stroke-width="1.2"/>
<path d="M165 395 C168 393.500 170.500 394.500 171 397" fill="none" stroke-width="1"/>
<path d="M98 397 C99 401 100 404 102.500 407" fill="none" stroke-width="1"/>
<!-- antennae -->
<path d="M121 382 C115.500 374 108 367.500 100 371.500" fill="none" stroke-width="2.200"/><circle cx="100.500" cy="371.200" r="1.300" stroke="none" fill="#000"/>
<path d="M135.500 380.500 C133.500 373 130 366 123.500 365.500" fill="none" stroke-width="2.200"/><circle cx="124" cy="365.500" r="1.300" stroke="none" fill="#000"/>
<path d="M150 384.500 C154 379 155.500 372.500 152 367" fill="none" stroke-width="2.200"/><circle cx="152.200" cy="367.500" r="1.300" stroke="none" fill="#000"/>
<!-- head -->
<ellipse cx="132.500" cy="403.500" rx="28.500" ry="21.500" fill="#fbf7c4"/>
<!-- eyes -->
<path d="M121.500 392.500 C118.500 395 117.500 399.500 120.500 401.500 C122.500 402 123 400 122 398.500" fill="none" stroke-width="2.500"/>
<path d="M141 391 C139 394 139.500 398.500 142.500 400 C144.500 400 144.500 398 143.500 396.500" fill="none" stroke-width="2.500"/>
<path d="M128 408.500 C129 406 132.500 406 133.500 408.500" fill="none" stroke-width="1.700"/>
<!-- mouth -->
<path d="M121 416.500 C128 419 134 420 138 419.500 C143 421 147 420.500 148.500 419.500 C149.500 416 149.500 412 149 408.500 C146 411 142 414.500 138 416.500 Z" fill="#fff" stroke="none"/>
<path d="M121 416.500 C128 419 134 420 138 419.500 C143 421 147 420.500 148.500 419.500 C149.500 416 149.500 412 149 408.500 M138 416.500 C142 414.500 146 411 149 408.500 M138 419.500 L139.500 416 M143.500 420.500 L143.500 413.500" fill="none" stroke-width="1.3"/>
<!-- motion lines -->
<path d="M208.500 399.500 C213.500 405 213 413.500 209 419.500 M216 406.500 C218.500 410 218.500 414 216.500 417.500 M169 414.500 C170.500 418.500 173 421.500 176.500 423.500 M165.500 420 C166.500 422 167.500 423.500 169.500 425" fill="none" stroke-width="1" stroke="#222"/>
</g>
</svg>

</div>
<!-- opera logo -->
<svg class="abs" style="left:10px;top:10px" width="22" height="22" viewBox="10 10 22 22"><defs><linearGradient id="opg" x1="0" y1="0" x2="1" y2="0"><stop offset="0" stop-color="#e09a10"/><stop offset=".12" stop-color="#b86a02"/><stop offset=".5" stop-color="#b46402"/><stop offset=".52" stop-color="#6a0404"/><stop offset=".9" stop-color="#6a0404"/><stop offset="1" stop-color="#8a2a10"/></linearGradient></defs><path fill-rule="evenodd" fill="url(#opg)" d="M20.800 11 C26.300 11 30.600 15.400 30.600 21 C30.600 26.600 26.300 31 20.800 31 C15.300 31 11 26.600 11 21 C11 15.400 15.300 11 20.800 11 Z M21.100 13.800 C18.300 13.800 16.200 16.800 16.200 20.900 C16.200 25 18.300 28 21.100 28 C23.900 28 26 25 26 20.900 C26 16.800 23.900 13.800 21.100 13.800 Z"/></svg>
<!-- tab favicon -->
<svg class="abs" style="left:49px;top:17px" width="13" height="18" viewBox="0 0 13 18"><path d="M1.600 6 C.800 2.800 3.200 .900 6.200 .900 C9.600 .900 11.800 3 11.400 6 C11.100 8.400 9.600 9.400 9.800 11 C10.600 13.800 9.400 16.600 6.800 16.600 C4 16.600 3.200 14.400 4.200 12.400 C5 10.600 4 9.600 2.800 8.600 Z" fill="#fff" stroke="#25298f" stroke-width="1.100" stroke-linejoin="round"/><path d="M3.800 4.600 C5 3 8.400 3.200 8.600 6 C8.700 7.800 7.200 8.800 7.400 11.200 M3.800 4.600 L7.400 11.200" fill="none" stroke="#25298f" stroke-width="1.100" stroke-linejoin="round"/></svg>
<!-- tab close / new tab -->
<svg class="abs" style="left:217.500px;top:20.700px" width="12" height="12" viewBox="0 0 12 12"><path d="M1.300 1.300 L10.700 10.700 M10.700 1.300 L1.300 10.700" stroke="#222" stroke-width="1.3" fill="none"/></svg>
<svg class="abs" style="left:246px;top:19px" width="13" height="13" viewBox="0 0 13 13"><path d="M6.5 .5 V12.5 M.5 6.5 H12.5" stroke="#333" stroke-width="1.2" fill="none"/></svg>
<!-- window controls -->
<svg class="abs" style="left:1108px;top:11px" width="18" height="18" viewBox="0 0 18 18"><circle cx="7.4" cy="7.6" r="5.4" fill="none" stroke="#333" stroke-width="1.4"/><path d="M11.3 11.6 L16 16.2" stroke="#333" stroke-width="1.6"/></svg>
<div class="abs" style="left:1151px;top:26px;width:12px;height:1px;background:#333"></div>
<div class="abs" style="left:1191px;top:15px;width:12px;height:12px;border:1px solid #333"></div>
<svg class="abs" style="left:1231px;top:15px" width="12" height="12" viewBox="0 0 12 12"><path d="M.4 .4 L11.6 11.6 M11.6 .4 L.4 11.6" stroke="#333" stroke-width="1.1" fill="none"/></svg>
<!-- nav icons -->
<svg class="abs" style="left:54px;top:53px" width="10" height="16" viewBox="0 0 10 16"><path d="M8.6 1.4 L2 7.8 L8.6 14.2" fill="none" stroke="#25282d" stroke-width="1.5"/></svg>
<svg class="abs" style="left:88px;top:53px" width="10" height="16" viewBox="0 0 10 16"><path d="M1.4 1.4 L8 7.8 L1.4 14.2" fill="none" stroke="#b3bac6" stroke-width="1.5"/></svg>
<svg class="abs" style="left:116px;top:52px" width="18" height="18" viewBox="0 0 18 18"><path d="M14.2 5.2 A6.3 6.3 0 1 0 14.7 9.6" fill="none" stroke="#25282d" stroke-width="1.5"/><path d="M14.9 1.6 V6 H10.5" fill="none" stroke="#25282d" stroke-width="1.5"/></svg>
<svg class="abs" style="left:149px;top:55px" width="15" height="12" viewBox="0 0 15 12"><g fill="none" stroke="#25282d" stroke-width="1.2"><rect x=".8" y=".8" width="5.6" height="4" rx=".9"/><rect x="8.4" y=".8" width="5.6" height="4" rx=".9"/><rect x=".8" y="7" width="5.6" height="4" rx=".9"/><rect x="8.4" y="7" width="5.6" height="4" rx=".9"/></g></svg>
<div class="abs" style="left:178px;top:54px;width:1px;height:15px;background:#cfd3d8"></div>
<svg class="abs" style="left:194px;top:53px" width="18" height="17" viewBox="0 0 18 17"><g fill="none" stroke="#777b82" stroke-width="1.2"><circle cx="6" cy="6.2" r="4.4"/><path d="M9.4 9 L15.6 13.4 L15.2 15.6 L12.6 15.4 L8 11"/></g><circle cx="5" cy="5.2" r=".9" fill="#777b82"/></svg>
<svg class="abs" style="left:218px;top:53px" width="12" height="15" viewBox="0 0 12 15"><path d="M3 6.5 V4.2 A3 3 0 0 1 9 4.2 V6.5" fill="none" stroke="#33363b" stroke-width="1.5"/><rect x=".8" y="6.2" width="10.4" height="7.6" rx="1.2" fill="#33363b"/></svg>
<!-- right toolbar icons -->
<svg class="abs" style="left:1081px;top:53px" width="16" height="15" viewBox="0 0 16 15"><path d="M1.2 4 H4.6 L5.8 2 H10.2 L11.4 4 H14.8 V13.4 H1.2 Z" fill="none" stroke="#33363b" stroke-width="1.2" stroke-linejoin="round"/><circle cx="8" cy="8.6" r="2.6" fill="none" stroke="#33363b" stroke-width="1.2"/></svg>
<svg class="abs" style="left:1108px;top:53px" width="14" height="16" viewBox="0 0 14 16"><path d="M7 1 L12.8 3.2 V8.6 C12.8 11.8 10 13.8 7 15 C4 13.8 1.2 11.8 1.2 8.6 V3.2 Z" fill="none" stroke="#33363b" stroke-width="1.2" stroke-linejoin="round"/><path d="M4.6 5.6 L9.4 10.4 M9.4 5.6 L4.6 10.4" stroke="#33363b" stroke-width="1.2"/></svg>
<svg class="abs" style="left:1134px;top:54px" width="16" height="14" viewBox="0 0 16 14"><path d="M1.2 1.2 L14.6 7 L1.6 12.8 L4.6 7 Z" fill="none" stroke="#33363b" stroke-width="1.2" stroke-linejoin="round"/></svg>
<svg class="abs" style="left:1159px;top:54px" width="16" height="14" viewBox="0 0 16 14"><path d="M8 13 C3 9.4 1 7.2 1 4.6 C1 2.4 2.8 1 4.6 1 C6.2 1 7.4 2 8 3.2 C8.6 2 9.8 1 11.4 1 C13.2 1 15 2.4 15 4.6 C15 7.2 13 9.4 8 13 Z" fill="none" stroke="#33363b" stroke-width="1.2" stroke-linejoin="round"/></svg>
<div class="abs" style="left:1183px;top:54px;width:1px;height:15px;background:#cfd3d8"></div>
<svg class="abs" style="left:1196px;top:54px" width="15" height="14" viewBox="0 0 15 14"><path d="M7.5 .8 V9 M3.8 5.6 L7.5 9.2 L11.2 5.6 M1 9.6 V12.6 H14 V9.6" fill="none" stroke="#33363b" stroke-width="1.2"/></svg>
<svg class="abs" style="left:1229px;top:54px" width="14" height="14" viewBox="0 0 14 14"><path d="M1 2.4 H13 M1 7 H13 M1 11.6 H13 M8.6 .6 V4.2 M4.6 5.2 V8.8 M6.6 9.8 V13.4" fill="none" stroke="#33363b" stroke-width="1.2"/></svg>
<!-- sidebar icons -->
<div class="abs" style="left:9px;top:89px;width:24px;height:24px;border-radius:3px;background:#0a9cf5"></div>
<svg class="abs" style="left:12px;top:92px" width="18" height="18" viewBox="0 0 18 18"><path d="M2.2 7.6 L9 1.8 L15.8 7.6 V13.6 A2.4 2.4 0 0 1 13.4 16 H4.6 A2.4 2.4 0 0 1 2.2 13.6 Z" fill="none" stroke="#fff" stroke-width="1.5" stroke-linejoin="round"/></svg>
<svg class="abs" style="left:11px;top:136px" width="20" height="20" viewBox="0 0 20 20"><path d="M10 2.600 L12.200 7.400 L17.400 8 L13.600 11.600 L14.600 16.800 L10 14.200 L5.400 16.800 L6.400 11.600 L2.600 8 L7.800 7.400 Z" fill="none" stroke="#33363b" stroke-width="1.500" stroke-linejoin="round"/><path d="M10 2.600 L12.200 7.400 L17.400 8 L13.600 11.600 L14.600 16.800 L10 14.200 L5.400 16.800 L6.400 11.600 L2.600 8 L7.800 7.400 Z" fill="none" stroke="#33363b" stroke-width="2.600" stroke-linejoin="round" opacity="0"/></svg>
<div class="abs sep" style="top:177px"></div>
<svg class="abs" style="left:10px;top:196px" width="22" height="22" viewBox="0 0 22 22"><defs><linearGradient id="msg" x1="0" y1="1" x2="1" y2="0"><stop offset="0" stop-color="#5a8bff"/><stop offset=".5" stop-color="#9a55ff"/><stop offset="1" stop-color="#c45cf0"/></linearGradient></defs><path d="M11 1 C5.4 1 1 5 1 10.2 C1 13 2.2 15.4 4.2 17 V20.6 L7.4 18.8 C8.6 19.2 9.8 19.4 11 19.4 C16.6 19.4 21 15.4 21 10.2 C21 5 16.6 1 11 1 Z" fill="url(#msg)"/><path d="M4.6 13 L9.4 7.6 L12 10.2 L17.4 7.6 L12.6 13 L10 10.4 Z" fill="#fff"/></svg>
<svg class="abs" style="left:11px;top:241px" width="21" height="21" viewBox="0 0 21 21"><path d="M10.5 1 A9.4 9.4 0 0 0 2.4 15.2 L1 20 L6 18.6 A9.4 9.4 0 1 0 10.5 1 Z" fill="#fff"/><path d="M10.5 2.4 A8 8 0 0 0 3.8 14.8 L2.9 18 L6.2 17.1 A8 8 0 1 0 10.5 2.4 Z" fill="#4fce5d"/><path d="M7.4 6 C6.4 6.6 6.2 8 7 9.6 C8 11.6 9.8 13.4 12 14.2 C13.4 14.7 14.4 14.2 14.8 13 L12.8 11.8 L11.8 12.6 C10.6 12 9.4 10.8 8.8 9.6 L9.6 8.6 L8.6 6.2 Z" fill="#fff"/></svg>
<svg class="abs" style="left:11px;top:287px" width="20" height="20" viewBox="0 0 20 20"><defs><linearGradient id="ig" x1="0" y1="1" x2="1" y2="0"><stop offset="0" stop-color="#f5b83d"/><stop offset=".35" stop-color="#e8663a"/><stop offset=".6" stop-color="#b03fc0"/><stop offset="1" stop-color="#6a4bdf"/></linearGradient></defs><rect width="20" height="20" rx="4.5" fill="url(#ig)"/><rect x="3.6" y="3.6" width="12.8" height="12.8" rx="3.6" fill="none" stroke="#fff" stroke-width="1.5"/><circle cx="10" cy="10" r="3.2" fill="none" stroke="#fff" stroke-width="1.5"/><circle cx="14" cy="6" r=".9" fill="#fff"/></svg>
<div class="abs sep" style="top:327px"></div>
<svg class="abs" style="left:11px;top:348px" width="19" height="19" viewBox="0 0 19 19"><circle cx="9.5" cy="9.5" r="8.2" fill="none" stroke="#33363b" stroke-width="1.3"/><path d="M7.4 6.2 L13 9.5 L7.4 12.8 Z" fill="none" stroke="#33363b" stroke-width="1.3" stroke-linejoin="round"/></svg>
<svg class="abs" style="left:11px;top:394px" width="20" height="18" viewBox="0 0 20 18"><path d="M1.4 1.4 L18.4 9 L1.8 16.6 L5.6 9 Z" fill="none" stroke="#33363b" stroke-width="1.4" stroke-linejoin="round"/></svg>
<div class="abs sep" style="top:433px"></div>
<svg class="abs" style="left:11px;top:455px" width="19" height="17" viewBox="0 0 19 17"><path d="M9.5 15.6 C3.6 11.2 1.2 8.6 1.2 5.6 C1.2 3 3.2 1.2 5.4 1.2 C7.2 1.2 8.8 2.4 9.5 3.8 C10.2 2.4 11.8 1.2 13.6 1.2 C15.8 1.2 17.8 3 17.8 5.6 C17.8 8.6 15.4 11.2 9.5 15.6 Z" fill="none" stroke="#33363b" stroke-width="1.4" stroke-linejoin="round"/></svg>
<svg class="abs" style="left:11px;top:498px" width="19" height="19" viewBox="0 0 19 19"><circle cx="9.5" cy="9.5" r="8.2" fill="none" stroke="#33363b" stroke-width="1.3"/><path d="M9.5 4.8 V9.8 L12.2 12.6" fill="none" stroke="#33363b" stroke-width="1.3"/></svg>
<div class="abs sep" style="top:539px"></div>
<svg class="abs" style="left:12px;top:557px" width="22" height="26" viewBox="0 0 22 26"><path d="M5.6 17 C5.6 14.4 2.6 13.2 2.6 9.4 C2.6 6 5.2 3.6 8.6 3.6 C12 3.6 14.6 6 14.6 9.4 C14.6 13.2 11.6 14.4 11.6 17 Z" fill="none" stroke="#33363b" stroke-width="1.3" stroke-linejoin="round"/><path d="M6 19 H11.2 M6.6 21 H10.6 M7.6 23 H9.6" stroke="#777" stroke-width="1.3"/><circle cx="16.6" cy="4.6" r="3" fill="#c96a10"/></svg>
<div class="abs" style="left:13.5px;top:1037.5px;width:3px;height:3px;border-radius:2px;background:#25282d"></div>
<div class="abs" style="left:19.5px;top:1037.5px;width:3px;height:3px;border-radius:2px;background:#25282d"></div>
<div class="abs" style="left:25.5px;top:1037.5px;width:3px;height:3px;border-radius:2px;background:#25282d"></div>

<div class="abs" id="scroll"></div>
<div class="abs" id="thumb"></div>
<!-- scrollbar arrows -->
<svg class="abs" style="left:1245px;top:84.500px" width="9" height="7" viewBox="0 0 9 7"><path d="M1 5.800 L4.500 2.200 L8 5.800" fill="none" stroke="#5a5a5a" stroke-width="2"/></svg>
<svg class="abs" style="left:1245px;top:1068px" width="9" height="7" viewBox="0 0 9 7"><path d="M1 1.200 L4.500 4.800 L8 1.200" fill="none" stroke="#a9aaa6" stroke-width="2"/></svg>

<div class="abs" id="topline"></div><div class="abs" id="leftline"></div><div class="abs" id="rightline"></div><div class="abs" id="botline"></div>
</body></html>
